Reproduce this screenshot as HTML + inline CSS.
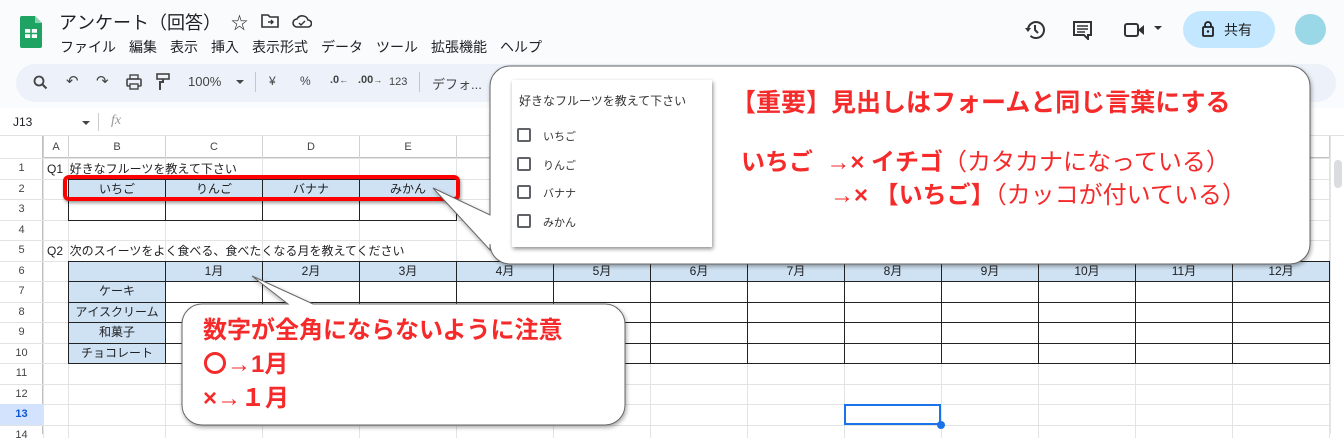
<!DOCTYPE html>
<html><head><meta charset="utf-8"><style>
*{margin:0;padding:0;box-sizing:border-box}
body{width:1344px;height:434px;overflow:hidden;position:relative;background:#fff;font-family:"Liberation Sans","Noto Sans CJK JP",sans-serif;color:#202124}
.a{position:absolute}
.top{left:0;top:0;width:1344px;height:108px;background:#f9fbfd}
.menu span{margin-right:13px}
.tb{left:16px;top:64px;width:1320px;height:38px;background:#edf2fa;border-radius:19px}
.ti{font-size:13px;color:#444;top:74px}
.r{color:#f52a2a;font-weight:bold}
.rn{color:#f52a2a}
.cb{position:absolute;left:517px;width:14px;height:14px;border:2px solid #5f6368;border-radius:2px}
.cl{position:absolute;left:543px;font-size:11px;color:#333}
</style></head><body>
<div class="a top"></div>
<svg class="a" style="left:20px;top:16px" width="22" height="32" viewBox="0 0 22 32"><path d="M2 0h13l7 7v23a2 2 0 0 1-2 2H2a2 2 0 0 1-2-2V2a2 2 0 0 1 2-2z" fill="#1ea362"/><path d="M15 0v7h7z" fill="#8ed1b1"/><rect x="5" y="13" width="12" height="9" fill="#fff"/><path d="M5 17.5h12M11 13v9" stroke="#1ea362" stroke-width="1.6"/></svg>
<div class="a" style="left:59px;top:9px;font-size:18px">アンケート（回答）</div>
<div class="a" style="left:231px;top:9px;font-size:17px">☆</div>
<svg class="a" style="left:261px;top:13px" width="18" height="16" viewBox="0 0 18 16"><path d="M1 2h6l2 2h8v10H1z" fill="none" stroke="#333" stroke-width="1.6"/><path d="M7 9h5M10 7l2 2-2 2" stroke="#333" stroke-width="1.4" fill="none"/></svg>
<svg class="a" style="left:292px;top:14px" width="20" height="14" viewBox="0 0 20 14"><path d="M5 13a4 4 0 0 1 0-8 6 6 0 0 1 11 1 3.5 3.5 0 0 1 0 7z" fill="none" stroke="#333" stroke-width="1.6"/><path d="M7 9l2 2 4-4" stroke="#333" stroke-width="1.4" fill="none"/></svg>
<div class="a menu" style="left:60px;top:37px;font-size:14px;white-space:nowrap"><span>ファイル</span><span>編集</span><span>表示</span><span>挿入</span><span>表示形式</span><span>データ</span><span>ツール</span><span>拡張機能</span><span>ヘルプ</span></div>
<svg class="a" style="left:1024px;top:19px" width="22" height="22" viewBox="0 0 22 22"><path d="M4 11a8 8 0 1 1 2.5 5.8" fill="none" stroke="#333" stroke-width="2"/><path d="M1 9l3 4 3-4z" fill="#333"/><path d="M11 6v5l3 3" stroke="#333" stroke-width="2" fill="none"/></svg>
<svg class="a" style="left:1072px;top:20px" width="22" height="20" viewBox="0 0 22 20"><path d="M2 2h17v13h-3v4l-4-4H2z" fill="none" stroke="#333" stroke-width="2"/><path d="M5 6h11M5 9h11M5 12h8" stroke="#333" stroke-width="1.6"/></svg>
<svg class="a" style="left:1124px;top:22px" width="22" height="16" viewBox="0 0 22 16"><rect x="1" y="2" width="13" height="12" rx="2" fill="none" stroke="#333" stroke-width="2"/><path d="M14 8l6-5v10z" fill="#333"/></svg>
<div class="a" style="left:1154px;top:26px;width:0;height:0;border-left:4px solid transparent;border-right:4px solid transparent;border-top:4px solid #333"></div>
<div class="a" style="left:1183px;top:11px;width:92px;height:37px;border-radius:19px;background:#c2e7ff"></div>
<svg class="a" style="left:1202px;top:21px" width="12" height="16" viewBox="0 0 12 16"><rect x="1" y="6" width="10" height="9" rx="1" fill="none" stroke="#1f1f1f" stroke-width="1.8"/><path d="M3 6V4a3 3 0 0 1 6 0v2" fill="none" stroke="#1f1f1f" stroke-width="1.8"/><circle cx="6" cy="10.5" r="1.2" fill="#1f1f1f"/></svg>
<div class="a" style="left:1224px;top:20px;font-size:14px;color:#1f1f1f">共有</div>
<div class="a" style="left:1295px;top:14px;width:31px;height:31px;border-radius:50%;background:#9ad8e8"></div>
<div class="a tb"></div>
<svg class="a" style="left:33px;top:75px" width="15" height="15" viewBox="0 0 15 15"><circle cx="6" cy="6" r="4.5" fill="none" stroke="#444" stroke-width="1.8"/><path d="M9.5 9.5l4 4" stroke="#444" stroke-width="2"/></svg>
<div class="a ti" style="left:66px;font-size:15px;top:72px">↶</div>
<div class="a ti" style="left:96px;font-size:15px;top:72px">↷</div>
<svg class="a" style="left:126px;top:74px" width="16" height="16" viewBox="0 0 16 16"><rect x="1" y="5" width="14" height="7" rx="1" fill="none" stroke="#444" stroke-width="1.6"/><rect x="4" y="1" width="8" height="4" fill="none" stroke="#444" stroke-width="1.4"/><rect x="4" y="10" width="8" height="5" fill="#edf2fa" stroke="#444" stroke-width="1.4"/></svg>
<svg class="a" style="left:156px;top:73px" width="14" height="18" viewBox="0 0 14 18"><rect x="1" y="1" width="12" height="5" fill="none" stroke="#444" stroke-width="1.6"/><path d="M7 6v3H4v2M4 11v6" stroke="#444" stroke-width="2" fill="none"/></svg>
<div class="a ti" style="left:188px">100%</div>
<div class="a" style="left:236px;top:80px;border-left:4px solid transparent;border-right:4px solid transparent;border-top:4px solid #444"></div>
<div class="a" style="left:255px;top:72px;width:1px;height:20px;background:#c7c7c7"></div>
<div class="a ti" style="left:269px;font-size:12px">¥</div>
<div class="a ti" style="left:300px;font-size:12px">%</div>
<div class="a ti" style="left:330px;font-size:11px;font-weight:bold">.0<span style="font-size:9px">←</span></div>
<div class="a ti" style="left:358px;font-size:11px;font-weight:bold">.00<span style="font-size:9px">→</span></div>
<div class="a ti" style="left:389px;font-size:11px;top:76px">123</div>
<div class="a" style="left:419px;top:72px;width:1px;height:20px;background:#c7c7c7"></div>
<div class="a ti" style="left:432px;font-size:13px">デフォ...</div>
<div class="a" style="left:0;top:108px;width:1344px;height:28px;background:#fff;border-bottom:1px solid #e1e1e1"></div>
<div class="a" style="left:13px;top:115px;font-size:12px">J13</div>
<div class="a" style="left:82px;top:121px;border-left:4px solid transparent;border-right:4px solid transparent;border-top:4px solid #444"></div>
<div class="a" style="left:98px;top:113px;width:1px;height:18px;background:#ccc"></div>
<div class="a" style="left:111px;top:113px;font-size:14px;color:#999;font-style:italic;font-family:'Liberation Serif',serif">fx</div>
<div id="grid"></div>
<div class="a" style="left:63px;top:175px;width:397px;height:26px;border:4px solid #f00;border-radius:6px;box-shadow:1px 2px 3px rgba(0,0,0,.4)"></div>
<div class="a" style="left:844px;top:404px;width:97px;height:21px;border:2px solid #1a73e8"></div>
<div class="a" style="left:937px;top:421px;width:8px;height:8px;border-radius:50%;background:#1a73e8"></div>
<div class="a" style="left:1330px;top:136px;width:14px;height:298px;background:#fff;border-left:1px solid #e5e5e5"></div>
<div class="a" style="left:1334px;top:160px;width:8px;height:28px;border-radius:4px;background:#dadce0"></div>
<svg class="a" style="left:0;top:0" width="1344" height="434">
<defs><filter id="sh" x="-5%" y="-5%" width="110%" height="120%"><feDropShadow dx="1" dy="2" stdDeviation="2" flood-opacity=".35"/></filter></defs>
<path filter="url(#sh)" d="M510 66H1290a20 20 0 0 1 20 20V244a20 20 0 0 1-20 20H510a20 20 0 0 1-20-20V250L433 188L490 215V86a20 20 0 0 1 20-20z" fill="#fff" stroke="#666" stroke-width="1"/>
<path filter="url(#sh)" d="M202 304H288L252 276L313 304H605a20 20 0 0 1 20 20V405a20 20 0 0 1-20 20H202a20 20 0 0 1-20-20V324a20 20 0 0 1 20-20z" fill="#fff" stroke="#666" stroke-width="1"/>
</svg>
<div class="a" style="left:512px;top:80px;width:200px;height:167px;background:#fff;box-shadow:1px 2px 4px rgba(0,0,0,.45)"></div>
<div class="a" style="left:519px;top:92px;font-size:12px;color:#333">好きなフルーツを教えて下さい</div>
<div class="cb" style="top:128px"></div><div class="cl" style="top:128px">いちご</div>
<div class="cb" style="top:157px"></div><div class="cl" style="top:157px">りんご</div>
<div class="cb" style="top:185px"></div><div class="cl" style="top:185px">バナナ</div>
<div class="cb" style="top:214px"></div><div class="cl" style="top:214px">みかん</div>
<div class="a r" style="left:731px;top:83px;font-size:25px;white-space:nowrap">【重要】見出しはフォームと同じ言葉にする</div>
<div class="a" style="left:741px;top:142px;font-size:24px;white-space:nowrap"><span class="r">いちご&nbsp; →× イチゴ</span><span class="rn">（カタカナになっている）</span></div>
<div class="a" style="left:830px;top:175px;font-size:24px;white-space:nowrap"><span class="r">→× 【いちご】</span><span class="rn">（カッコが付いている）</span></div>
<div class="a r" style="left:203px;top:314px;font-size:24px;line-height:34px;white-space:nowrap">数字が全角にならないように注意<br>〇→1月<br>×→１月</div>
<script>
var g=document.getElementById('grid'),h='';
var cx=[0,43,68];for(var i=0;i<13;i++)cx.push(165+97*i);
var top0=158,rh=20.5;
function ry(r){return top0+(r-1)*rh}
h+='<div class="a" style="left:0;top:136px;width:1344px;height:22px;background:#fff;border-bottom:1px solid #c0c0c0"></div>';
h+='<div class="a" style="left:0;top:136px;width:43px;height:298px;background:#fff;border-right:1px solid #c0c0c0"></div>';
var L='ABCDEFGHIJKLMN';
for(var i=1;i<cx.length;i++){var w=(i+1<cx.length?cx[i+1]:1330)-cx[i];
h+='<div class="a" style="left:'+cx[i]+'px;top:136px;width:'+w+'px;height:22px;border-left:1px solid #d0d0d0;font-size:11px;color:#444;text-align:center;line-height:22px">'+L[i-1]+'</div>';
h+='<div class="a" style="left:'+cx[i]+'px;top:158px;width:1px;height:280px;background:#e2e3e3"></div>';}
for(var r=1;r<=14;r++){var y=ry(r);
h+='<div class="a" style="left:0;top:'+y+'px;width:1330px;height:1px;background:#e2e3e3"></div>';
h+='<div class="a" style="left:0;top:'+y+'px;width:43px;height:'+rh+'px;font-size:11px;color:#444;text-align:center;line-height:21px;'+(r==13?'background:#d3e3fd;font-weight:bold;color:#0b57d0':'')+'">'+r+'</div>';}
function cell(c,r,t,bg){var x=cx[c],w=cx[c+1]-x;
h+='<div class="a" style="left:'+x+'px;top:'+ry(r)+'px;width:'+(w+1)+'px;height:'+(rh+1)+'px;border:1px solid #222;'+(bg?'background:#cfe2f3;':'')+'font-size:12px;line-height:19px;text-align:center;white-space:nowrap;overflow:hidden">'+(t||'')+'</div>';}
var f=['いちご','りんご','バナナ','みかん'];
for(var i=0;i<4;i++){cell(2+i,2,f[i],1);cell(2+i,3,'',0);}
cell(2,6,'',1);for(var i=0;i<12;i++){cell(3+i,6,(i+1)+'月',1);}
var s=['ケーキ','アイスクリーム','和菓子','チョコレート'];
for(var r=0;r<4;r++){cell(2,7+r,s[r],1);for(var i=0;i<12;i++)cell(3+i,7+r,'',0);}
h+='<div class="a" style="left:47px;top:'+(ry(1)+2)+'px;font-size:12px">Q1&nbsp; 好きなフルーツを教えて下さい</div>';
h+='<div class="a" style="left:47px;top:'+(ry(5)+2)+'px;font-size:12px">Q2&nbsp; 次のスイーツをよく食べる、食べたくなる月を教えてください</div>';
g.innerHTML=h;
</script>
</body></html>
